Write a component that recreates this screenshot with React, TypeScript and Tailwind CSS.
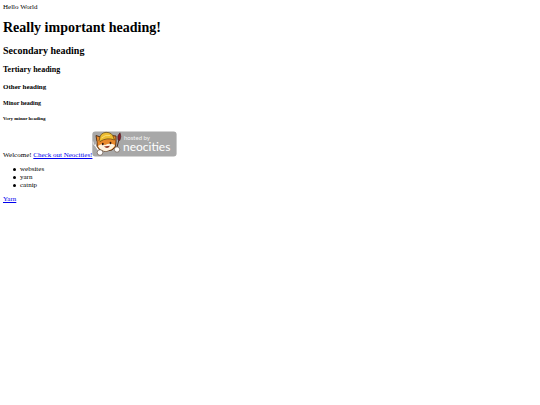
const items = ["websites", "yarn", "catnip"];

function NeocitiesBadge() {
  return (
    <svg
      viewBox="0 0 85 26"
      className="inline-block h-[26px] w-[85px] align-baseline"
      role="img"
      aria-label="Hosted by Neocities"
    >
      <rect x="0.3" y="0.6" width="84.3" height="25" rx="3" fill="#a8a8a8" />
      {/* fork and brush */}
      <path d="M3 14 L7 20" stroke="#fff" strokeWidth="1.3" />
      <path d="M1 10.5 Q0.8 14 3 14.5 Q5 13.5 4.5 10" fill="none" stroke="#eee" strokeWidth="0.9" />
      <path d="M27 8.5 L24 20" stroke="#4a2b20" strokeWidth="1" />
      <path d="M26 9 Q24.8 4.5 28 1.8 Q29.8 5.5 27.8 9.5 Z" fill="#8b1c2c" stroke="#3c1a18" strokeWidth="0.5" />
      {/* cat */}
      <path d="M5 11 L4 4.5 L8.5 6 Q14 2 19 4.5 L24 5 L24 11 Q25 16 20 19 Q13 21.5 8 19 Q4 16 5 11 Z" fill="#e8892b" stroke="#4a2b16" strokeWidth="0.9" />
      <path d="M6 15 Q9 12 13 14 Q18 11 23 14 Q21 19 14 20.2 Q8 19.8 6 15 Z" fill="#fff4df" />
      <path d="M7.5 8 Q8 2 14 1.3 Q20.5 1.5 21.5 6.5 L22.5 9 Q15 6 8 10.5 Q6.5 10 7.5 8 Z" fill="#edbd32" stroke="#5b4213" strokeWidth="0.7" />
      <path d="M9.5 7 Q13 3.5 18 4.5" fill="none" stroke="#fae07a" strokeWidth="0.9" />
      <ellipse cx="10.8" cy="13" rx="0.9" ry="1.2" fill="#35180d" />
      <ellipse cx="18.5" cy="12" rx="0.9" ry="1.2" fill="#35180d" />
      <path d="M12 15.5 Q15.5 18.8 18 14.8 Z" fill="#8e3020" />
      <circle cx="8" cy="21.5" r="2.8" fill="#fff" stroke="#594231" strokeWidth="0.6" />
      <circle cx="25" cy="18.5" r="2.7" fill="#fff" stroke="#594231" strokeWidth="0.6" />
      <text x="32" y="9" fontSize="6" fill="#f5f5f5" className="font-[Lato,sans-serif]">
        hosted by
      </text>
      <text x="31" y="20" fontSize="12" fill="#fff" className="font-[Lato,sans-serif]">
        neocities
      </text>
    </svg>
  );
}

export default function App() {
  return (
    <main className="p-[3px] font-['Liberation_Serif',serif] text-[7px] leading-[8px] text-black">
      <p>Hello World</p>
      <h1 className="mt-[9px] text-[14px] leading-[16px] font-bold">Really important heading!</h1>
      <h2 className="mt-[9px] text-[10px] leading-[12px] font-bold">Secondary heading</h2>
      <h3 className="mt-2 text-[8px] leading-[10px] font-bold">Tertiary heading</h3>
      <h4 className="mt-2 font-bold">Other heading</h4>
      <h5 className="mt-2 text-[6px] font-bold">Minor heading</h5>
      <h6 className="mt-2 text-[5px] font-bold">Very minor heading</h6>

      <p className="mt-2">
        Welcome!{" "}
        <a href="#neocities" className="text-[#0000ee] underline">
          Check out Neocities!
        </a>
        <a href="#hosted">
          <NeocitiesBadge />
        </a>
      </p>

      <ul className="mt-[6px]">
        {items.map((item) => (
          <li
            key={item}
            className="flex items-center gap-1 pl-[10px] before:size-[3px] before:rounded-full before:bg-black"
          >
            {item}
          </li>
        ))}
      </ul>

      <p className="mt-[6px]">
        <a href="#yarn" className="text-[#0000ee] underline">
          Yarn
        </a>
      </p>
    </main>
  );
}
